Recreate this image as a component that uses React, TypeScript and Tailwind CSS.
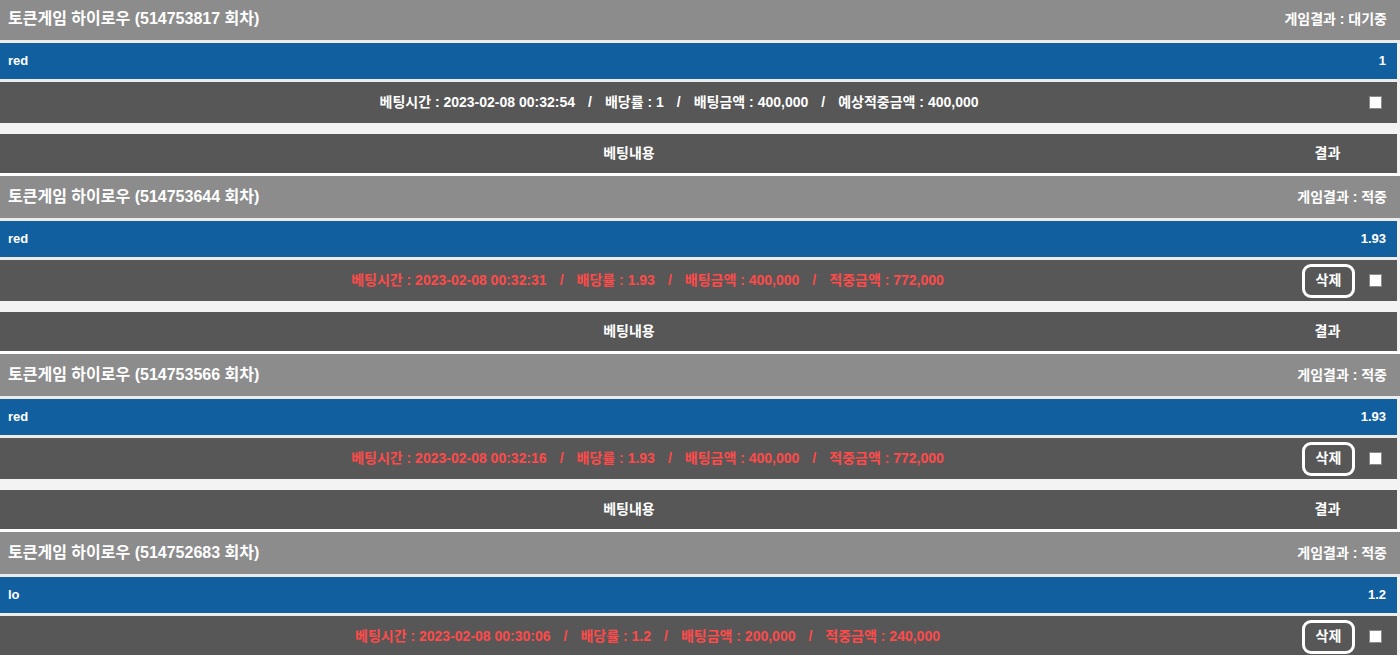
// Betting history list: token high-low game rounds with bet details.
type Bet = {
  round: string;
  result: string;
  pick: string;
  odds: string;
  time: string;
  amount: string;
  winLabel: string;
  win: string;
  hit: boolean;
};

const BETS: Bet[] = [
  {
    round: "514753817",
    result: "대기중",
    pick: "red",
    odds: "1",
    time: "2023-02-08 00:32:54",
    amount: "400,000",
    winLabel: "예상적중금액",
    win: "400,000",
    hit: false,
  },
  {
    round: "514753644",
    result: "적중",
    pick: "red",
    odds: "1.93",
    time: "2023-02-08 00:32:31",
    amount: "400,000",
    winLabel: "적중금액",
    win: "772,000",
    hit: true,
  },
  {
    round: "514753566",
    result: "적중",
    pick: "red",
    odds: "1.93",
    time: "2023-02-08 00:32:16",
    amount: "400,000",
    winLabel: "적중금액",
    win: "772,000",
    hit: true,
  },
  {
    round: "514752683",
    result: "적중",
    pick: "lo",
    odds: "1.2",
    time: "2023-02-08 00:30:06",
    amount: "200,000",
    winLabel: "적중금액",
    win: "240,000",
    hit: true,
  },
];

const FONT = { fontFamily: '"Liberation Sans", "Noto Sans CJK KR", sans-serif' };

function Slash() {
  return <span className="mx-[13px]">/</span>;
}

// The list is scrolled: the first group's column header sits above the viewport.
function BetGroup({ bet, first }: { bet: Bet; first: boolean }) {
  return (
    <div className="flex flex-col">
      {!first && (
        <>
          <div className="flex h-[39px] w-[1397px] items-center bg-[#575757] text-[14px] font-bold text-white">
            <div className="w-[1258px] text-center">베팅내용</div>
            <div className="flex-1 text-center">결과</div>
          </div>
          <div className="h-[3px] bg-white" />
        </>
      )}
      <div
        className={`flex items-center justify-between bg-[#8c8c8c] pl-[8px] pr-[13px] text-white ${
          first ? "h-[40px] pb-[2px]" : "h-[42px]"
        }`}
      >
        <span className="text-[16px] font-bold">
          토큰게임 하이로우 ({bet.round} 회차)
        </span>
        <span className="text-[14px] font-bold">게임결과 : {bet.result}</span>
      </div>
      <div className="h-[3px] bg-[#ececec]" />
      <div className="flex h-[36px] w-[1397px] items-center justify-between bg-[#115f9e] pl-[8px] pr-[11px] text-[13px] font-bold text-white">
        <span>{bet.pick}</span>
        <span>{bet.odds}</span>
      </div>
      <div className="h-[3px] bg-[#ececec]" />
      <div className="flex h-[41px] w-[1397px] items-center bg-[#575757] text-[14px] font-bold">
        <div
          className={`flex-1 text-center whitespace-nowrap ${
            bet.hit ? "text-[#ff4a4a]" : "text-white"
          }`}
        >
          베팅시간 : {bet.time}
          <Slash />
          배당률 : {bet.odds}
          <Slash />
          배팅금액 : {bet.amount}
          <Slash />
          {bet.winLabel} : {bet.win}
        </div>
        <div className="flex items-center pl-[7px] pr-[15px]">
          {bet.hit && (
            <button
              type="button"
              className="mr-[10px] flex h-[34px] w-[53px] items-center justify-center rounded-[9px] border-[3px] border-white text-[14px] font-bold text-white"
            >
              삭제
            </button>
          )}
          <span className="ml-[4px] block h-[13px] w-[13px] border border-[#8a8a8a] bg-white" />
        </div>
      </div>
      <div className="h-[11px] bg-[#f3f3f3]" />
    </div>
  );
}

export default function App() {
  return (
    <div className="h-[655px] w-[1400px] overflow-hidden bg-[#f3f3f3]" style={FONT}>
      {BETS.map((b, i) => (
        <BetGroup key={b.round} bet={b} first={i === 0} />
      ))}
    </div>
  );
}
